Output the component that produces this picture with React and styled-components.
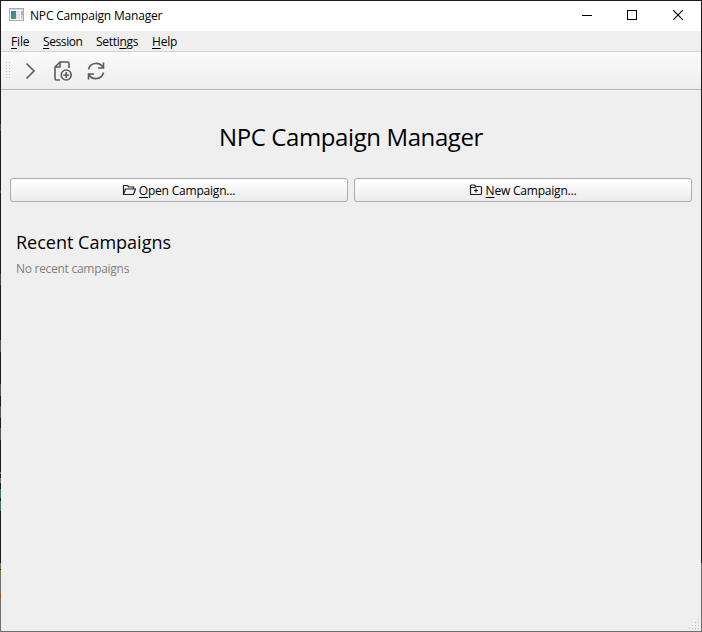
import React from 'react';
import styled, { createGlobalStyle } from 'styled-components';

const Global = createGlobalStyle`
  * { box-sizing: border-box; }
  body { margin: 0; overflow: hidden; }
`;

const Frame = styled.div`
  width: 702px;
  height: 632px;
  padding: 1px;
  background:
    linear-gradient(#1e1b20, #1e1b20) 0 0 / 702px 1px no-repeat,
    linear-gradient(#6f6f6f, #6f6f6f) 0 631px / 702px 1px no-repeat,
    linear-gradient(
      #1e1b20 124px, #444 124px 131px, #1e1b20 131px 190px, #444 190px 193px,
      #1e1b20 193px 274px, #444 274px 285px, #1e1b20 285px 340px, #555 340px 352px,
      #1e1b20 352px 384px, #555 384px 396px,
      #1e1b20 396px 406px, #555 406px 418px, #1e1b20 418px 428px, #555 428px 440px,
      #1e1b20 440px 472px, #777 472px 474px, #1e1b20 474px 478px, #777 478px 483px,
      #1e1b20 483px 489px, #3f7564 489px 498px, #1e1b20 498px 501px, #3f7564 501px 511px,
      #1e1b20 511px 563px, #6f6f6f 563px 569px, #222 569px 570px, #77703f 570px 575px,
      #6f6f6f 575px 593px, #8a5a34 593px 599px, #6f6f6f 599px
    ) 0 0 / 1px 632px no-repeat,
    linear-gradient(#1e1b20 563px, #6f6f6f 563px) 701px 0 / 1px 632px no-repeat;
`;

const Window = styled.div`
  height: 630px;
  display: flex;
  flex-direction: column;
  background: #efefef;
  font-family: "Open Sans", "Noto Sans", sans-serif;
  font-size: 12px;
  color: #000;
`;

const Label = styled.span`
  letter-spacing: ${(p) => p.$track || 0}px;
  white-space: nowrap;
`;

const Key = styled.span`
  text-decoration: underline;
  text-decoration-thickness: 1px;
  text-underline-offset: 2px;
  text-decoration-skip-ink: none;
`;

const TitleBar = styled.header`
  flex: none;
  height: 30px;
  display: flex;
  align-items: center;
  background: #fff;
  padding-left: 8px;
`;

const AppIcon = styled.svg`
  margin-bottom: 2px;
`;

const TitleText = styled.div`
  flex: 1;
  padding-left: 6px;
  line-height: 28px;
`;

const CaptionButton = styled.div`
  width: ${(p) => p.$width}px;
  height: 30px;
  display: flex;
  align-items: center;
  justify-content: center;
  padding-bottom: 2px;
`;

const MenuBar = styled.nav`
  flex: none;
  height: 20px;
  display: flex;
  padding-left: 10px;
  line-height: 21px;
`;

const MenuItem = styled.div`
  width: ${(p) => p.$width}px;
  white-space: nowrap;
`;

const ToolBar = styled.div`
  flex: none;
  height: 39px;
  display: flex;
  align-items: center;
  gap: 9px;
  padding-left: 4px;
  border-top: 1px solid #d3d3d3;
  border-bottom: 1px solid #b5b5b5;
  background: linear-gradient(#fafafa, #eeeeee);
`;

const Grip = styled.svg`
  margin-right: -1px;
`;

const ToolIcon = styled.svg`
  width: 24px;
  height: 24px;
  fill: none;
  stroke: #5c5c5c;
  stroke-width: 1.6;
`;

const Content = styled.main`
  flex: 1;
  padding: 0 9px;
  border-top: 1px solid #f5f5f5;
`;

const Heading = styled.h1`
  margin: 28px 0 0;
  height: 36px;
  line-height: 36px;
  font-size: 24px;
  font-weight: 400;
  text-align: center;
`;

const Actions = styled.div`
  display: grid;
  grid-template-columns: 1fr 1fr;
  gap: 6px;
  margin-top: 23px;
`;

const Button = styled.button`
  height: 24px;
  display: flex;
  align-items: center;
  justify-content: center;
  gap: 3px;
  padding: 0 1px 0 0;
  border: 1px solid #ababab;
  border-radius: 3px;
  background: linear-gradient(#fff, #ececec);
  font: inherit;
  color: inherit;
`;

const ButtonIcon = styled.svg`
  width: 14px;
  height: 14px;
  fill: none;
  stroke: #222;
  stroke-width: 1.2;
`;

const Subheading = styled.h2`
  margin: 27px 0 0 6px;
  height: 26px;
  line-height: 26px;
  font-size: 18px;
  font-weight: 400;
`;

const Empty = styled.p`
  margin: 5px 0 0 6px;
  line-height: 18px;
  color: #7f7f7f;
`;

const Footer = styled.footer`
  flex: none;
  display: flex;
  justify-content: flex-end;
  height: 13px;
`;

const gripRows = Array.from({ length: 6 }, (_, i) => 3 + i * 3);

export default function App() {
  return (
    <>
      <Global />
      <Frame>
        <Window>
          <TitleBar>
            <AppIcon width="15" height="14" viewBox="0 0 15 14">
              <defs>
                <linearGradient id="pane" x1="0" y1="0" x2="1" y2="1">
                  <stop offset="0" stopColor="#4478a5" />
                  <stop offset="1" stopColor="#4ba070" />
                </linearGradient>
              </defs>
              <rect x=".5" y=".5" width="14" height="12" fill="#f6f6f6" stroke="#a5adb0" />
              <path d="M1 1.5h13" stroke="#d6dadd" />
              <rect x="2" y="3" width="5" height="8" fill="url(#pane)" />
              <rect x="7" y="3" width="4" height="8" fill="#e4e6ea" />
              <rect x="12" y="3" width="2" height="4" fill="#9fbdb3" />
              <rect x="12" y="7" width="2" height="4" fill="#cdd2d5" />
            </AppIcon>
            <TitleText><Label $track={-0.18}>NPC Campaign Manager</Label></TitleText>
            <CaptionButton $width={45}>
              <svg width="10" height="10"><path d="M0 5.5h10" stroke="#000" /></svg>
            </CaptionButton>
            <CaptionButton $width={45}>
              <svg width="10" height="10"><rect x=".5" y=".5" width="9" height="9" fill="none" stroke="#000" /></svg>
            </CaptionButton>
            <CaptionButton $width={47}>
              <svg width="10" height="10"><path d="M0 0l10 10M10 0L0 10" stroke="#000" strokeWidth="1.1" /></svg>
            </CaptionButton>
          </TitleBar>
          <MenuBar>
            <MenuItem $width={32}><Label $track={-0.15}><Key>F</Key>ile</Label></MenuItem>
            <MenuItem $width={53}><Label $track={-0.4}><Key>S</Key>ession</Label></MenuItem>
            <MenuItem $width={56}><Label $track={-0.3}>Setti<Key>n</Key>gs</Label></MenuItem>
            <MenuItem $width={40}><Label $track={-0.2}><Key>H</Key>elp</Label></MenuItem>
          </MenuBar>
          <ToolBar>
            <Grip width="5" height="24" fill="#c2c2c2">
              {gripRows.map((y) => (
                <g key={y}>
                  <rect x="1" y={y} width="1" height="1" />
                  <rect x="4" y={y} width="1" height="1" />
                </g>
              ))}
            </Grip>
            <ToolIcon viewBox="0 0 24 24"><path d="M8.500 4.500l7.500 7.500-7.500 7.500" /></ToolIcon>
            <ToolIcon viewBox="0 0 24 24">
              <path d="M9 21H5.500Q4 21 4 19.500V8l5-5h7.500Q18 3 18 4.500V9M9 3v5H4" />
              <circle cx="15.200" cy="16" r="5" />
              <path d="M15.200 13v6M12.200 16h6" />
            </ToolIcon>
            <ToolIcon viewBox="0 0 24 24">
              <path d="M4.500 10.500A7.800 7.800 0 0 1 19 8.500M19.500 3.500V9H14M19.500 13.500A7.800 7.800 0 0 1 5 15.500M4.500 20.500V15H10" />
            </ToolIcon>
          </ToolBar>
          <Content>
            <Heading><Label $track={-0.4}>NPC Campaign Manager</Label></Heading>
            <Actions>
              <Button>
                <ButtonIcon viewBox="0 0 14 14">
                  <path d="M1.500 11.500V2.500h4l1.300 1.500h4.700v2M1.500 11.500l2-5.500h10l-2 5.500z" />
                </ButtonIcon>
                <Label $track={-0.2}><Key>O</Key>pen Campaign...</Label>
              </Button>
              <Button>
                <ButtonIcon viewBox="0 0 14 14">
                  <path d="M1.500 3Q1.500 2 2.500 2H5.500L7 3.500h4.500q1 0 1 1v6q0 1-1 1h-9q-1 0-1-1zM1.500 4.500h4L7 3.500M7 5.500v4M5 7.500h4" />
                </ButtonIcon>
                <Label $track={-0.2}><Key>N</Key>ew Campaign...</Label>
              </Button>
            </Actions>
            <Subheading><Label $track={0}>Recent Campaigns</Label></Subheading>
            <Empty><Label $track={-0.28}>No recent campaigns</Label></Empty>
          </Content>
          <Footer>
            <svg width="13" height="13" fill="#bdbdbd">
              {[0, 1, 2, 3].flatMap((r) =>
                Array.from({ length: r + 1 }, (_, c) => (
                  <rect key={`${r}-${c}`} x={10 - c * 3} y={1 + r * 3} width="1" height="1" />
                ))
              )}
            </svg>
          </Footer>
        </Window>
      </Frame>
    </>
  );
}
